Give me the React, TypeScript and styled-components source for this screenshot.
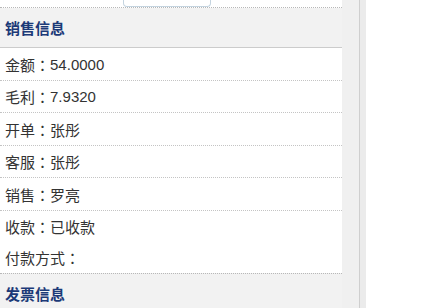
import styled, { createGlobalStyle } from 'styled-components';

const GlobalStyle = createGlobalStyle`
  html, body {
    margin: 0;
    padding: 0;
    background: #ffffff;
  }
  body {
    font-family: "Liberation Sans", "Noto Sans CJK SC", sans-serif;
    font-size: 15px;
    color: #333333;
  }
`;

const Page = styled.div`
  display: flex;
  height: 308px;
  overflow: hidden;
`;

const Panel = styled.div`
  width: 342px;
  flex-shrink: 0;
  display: flex;
  flex-direction: column;
  background: #ffffff;
`;

const TopBar = styled.div`
  height: 9px;
  border-bottom: 1px dotted #b8b8b8;
  padding-left: 123px;
`;

const TabStub = styled.div`
  width: 88px;
  height: 7px;
  box-sizing: border-box;
  border: 1px solid #c4d4e0;
  border-top: none;
  border-radius: 0 0 4px 4px;
  background: #ffffff;
`;

const SectionHeader = styled.div`
  height: 39px;
  flex-shrink: 0;
  display: flex;
  align-items: center;
  padding-left: 5px;
  background: #f2f2f2;
  border-bottom: 1px solid #cccccc;
  font-weight: bold;
  font-size: 15px;
  color: #1c3a78;
`;

const SectionHeaderTop = styled(SectionHeader)`
  border-top: 1px dotted #b8b8b8;
`;

const Row = styled.div<{ $h: number; $line?: boolean }>`
  height: ${(p) => p.$h}px;
  flex-shrink: 0;
  box-sizing: border-box;
  display: flex;
  align-items: center;
  padding-left: 5px;
  border-bottom: ${(p) => (p.$line ? '1px dotted #c4c4c4' : 'none')};
  font-size: 15px;
  color: #333333;
`;

const Colon = styled.span`
  font-family: "Noto Sans CJK TC", "Noto Sans CJK SC", sans-serif;
`;

const Gutter = styled.div`
  width: 17px;
  flex-shrink: 0;
  background: #f0f0f0;
  border-right: 1px solid #cfcfcf;
`;

const Edge = styled.div`
  width: 6px;
  flex-shrink: 0;
  background: #ebebeb;
`;

const sales = [
  { label: '金额', value: '54.0000', h: 33, line: true },
  { label: '毛利', value: '7.9320', h: 32, line: true },
  { label: '开单', value: '张彤', h: 33, line: true },
  { label: '客服', value: '张彤', h: 32, line: true },
  { label: '销售', value: '罗亮', h: 33, line: true },
  { label: '收款', value: '已收款', h: 31, line: false },
  { label: '付款方式', value: '', h: 31, line: false },
];

export default function App() {
  return (
    <>
      <GlobalStyle />
      <Page>
        <Panel>
          <TopBar>
            <TabStub />
          </TopBar>
          <SectionHeader>销售信息</SectionHeader>
          {sales.map((r) => (
            <Row key={r.label} $h={r.h} $line={r.line}>
              {r.label}
              <Colon>：</Colon>
              {r.value}
            </Row>
          ))}
          <SectionHeaderTop>发票信息</SectionHeaderTop>
        </Panel>
        <Gutter />
        <Edge />
      </Page>
    </>
  );
}
